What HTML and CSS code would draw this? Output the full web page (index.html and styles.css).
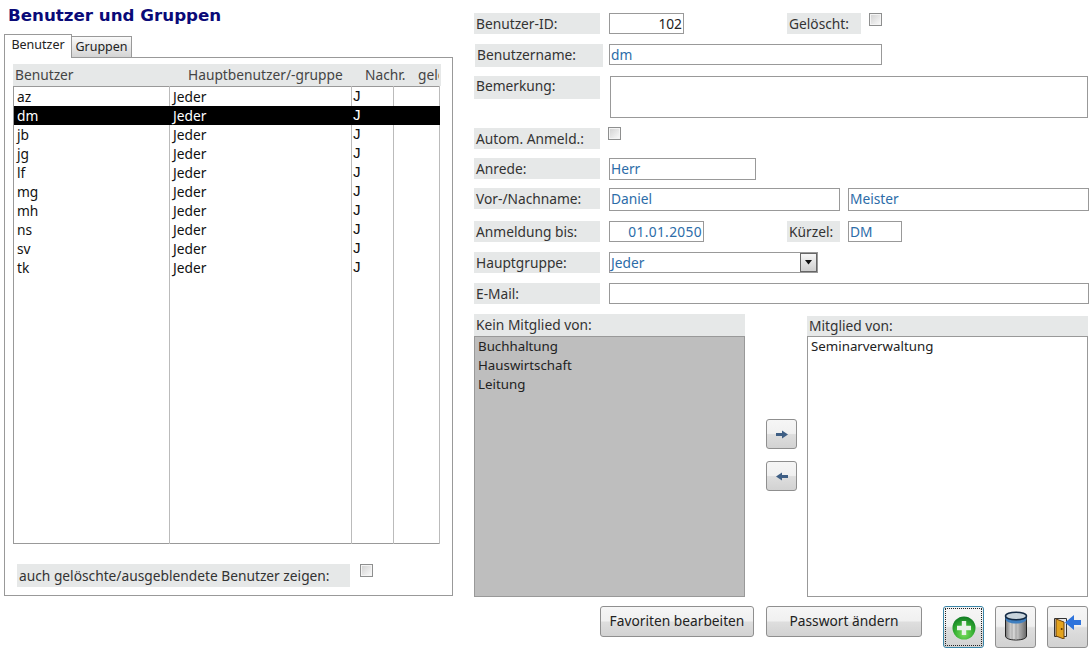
FILE: index.html
```html
<!DOCTYPE html>
<html lang="de">
<head>
<meta charset="utf-8">
<title>Benutzer und Gruppen</title>
<link rel="stylesheet" href="styles.css">
</head>
<body>
<div class="page">
  <section class="left">
    <h1 class="title">Benutzer und Gruppen</h1>
    <div class="tabs">
      <div class="tab tab-active">Benutzer</div>
      <div class="tab tab-idle">Gruppen</div>
    </div>
    <div class="panel">
      <div class="thead">
        <span class="th th-1">Benutzer</span>
        <span class="th th-2">Hauptbenutzer/-gruppe</span>
        <span class="th th-3">Nachr.</span>
        <span class="th th-4">gelöscht</span>
      </div>
      <table class="grid">
        <colgroup><col class="c1"><col class="c2"><col class="c3"><col class="c4"></colgroup>
        <tbody>
          <tr><td>az</td><td>Jeder</td><td>J</td><td></td></tr>
          <tr class="sel"><td>dm</td><td>Jeder</td><td>J</td><td></td></tr>
          <tr><td>jb</td><td>Jeder</td><td>J</td><td></td></tr>
          <tr><td>jg</td><td>Jeder</td><td>J</td><td></td></tr>
          <tr><td>lf</td><td>Jeder</td><td>J</td><td></td></tr>
          <tr><td>mg</td><td>Jeder</td><td>J</td><td></td></tr>
          <tr><td>mh</td><td>Jeder</td><td>J</td><td></td></tr>
          <tr><td>ns</td><td>Jeder</td><td>J</td><td></td></tr>
          <tr><td>sv</td><td>Jeder</td><td>J</td><td></td></tr>
          <tr><td>tk</td><td>Jeder</td><td>J</td><td></td></tr>
          <tr class="filler"><td></td><td></td><td></td><td></td></tr>
        </tbody>
      </table>
      <div class="panel-foot">
        <span class="label label-foot">auch gelöschte/ausgeblendete Benutzer zeigen:</span>
        <span class="check"></span>
      </div>
    </div>
  </section>

  <section class="right">
    <div class="row r1">
      <span class="label">Benutzer-ID:</span>
      <span class="field f-id">102</span>
      <span class="label label-del">Gelöscht:</span>
      <span class="check check-del"></span>
    </div>
    <div class="row r2">
      <span class="label label-name">Benutzername:</span>
      <span class="field value f-name">dm</span>
    </div>
    <div class="row r3">
      <span class="label label-top">Bemerkung:</span>
      <span class="field f-note"></span>
    </div>
    <div class="row r4">
      <span class="label">Autom. Anmeld.:</span>
      <span class="check check-auto"></span>
    </div>
    <div class="row r5">
      <span class="label">Anrede:</span>
      <span class="field value f-title">Herr</span>
    </div>
    <div class="row r6">
      <span class="label">Vor-/Nachname:</span>
      <span class="field value f-first">Daniel</span>
      <span class="field value f-last">Meister</span>
    </div>
    <div class="row r7">
      <span class="label">Anmeldung bis:</span>
      <span class="field value f-date">01.01.2050</span>
      <span class="label label-short">Kürzel:</span>
      <span class="field value f-short">DM</span>
    </div>
    <div class="row r8">
      <span class="label">Hauptgruppe:</span>
      <span class="field value f-select">Jeder<span class="arrow"><svg width="9" height="5" viewBox="0 0 9 5"><path d="M1 0h7L4.500 4.500z" fill="#111"/></svg></span></span>
    </div>
    <div class="row r9">
      <span class="label">E-Mail:</span>
      <span class="field f-mail"></span>
    </div>
    <div class="lists">
      <div class="list-col list-left">
        <div class="list-head">Kein Mitglied von:</div>
        <div class="list list-off">
          <div>Buchhaltung</div>
          <div>Hauswirtschaft</div>
          <div>Leitung</div>
        </div>
      </div>
      <div class="movers">
        <button class="btn mover"><svg width="12" height="9" viewBox="0 0 12 9"><path d="M0 3h6V.500L12 4.500l-6 4V6H0z" fill="#3f5f85"/></svg></button>
        <button class="btn mover"><svg width="12" height="9" viewBox="0 0 12 9"><path d="M12 3H6V.500L0 4.500l6 4V6h6z" fill="#3f5f85"/></svg></button>
      </div>
      <div class="list-col list-right">
        <div class="list-head head-right">Mitglied von:</div>
        <div class="list">
          <div>Seminarverwaltung</div>
        </div>
      </div>
    </div>
    <div class="actions">
      <button class="btn text-btn b-fav">Favoriten bearbeiten</button>
      <button class="btn text-btn b-pw">Passwort ändern</button>
      <button class="btn icon-btn focus"><svg class="ic-add" width="24" height="24" viewBox="0 0 24 24"><defs><radialGradient id="g" cx=".5" cy=".75" r=".75"><stop offset="0" stop-color="#7fe060"/><stop offset=".55" stop-color="#34ae32"/><stop offset="1" stop-color="#0f7a24"/></radialGradient></defs><circle cx="12" cy="12" r="11.500" fill="url(#g)"/><path d="M9.800 5h4.400v4.800H19v4.400h-4.800V19H9.800v-4.800H5V9.800h4.800z" fill="#e8f2e8"/></svg></button>
      <button class="btn icon-btn"><svg class="ic-bin" width="24" height="30" viewBox="0 0 24 30"><defs><linearGradient id="c" x1="0" x2="1" y1="0" y2="0"><stop offset="0" stop-color="#777"/><stop offset=".3" stop-color="#ddd"/><stop offset=".6" stop-color="#bbb"/><stop offset="1" stop-color="#666"/></linearGradient></defs><path d="M1.500 5v20c0 2.500 4.500 4 10.500 4s10.500-1.500 10.500-4V5z" fill="url(#c)" stroke="#222" stroke-width="1"/><path d="M8 11v17M12 12v17M16 11v17" stroke="#a0a0a0" stroke-width="1"/><path d="M1.500 5v3c0 2.500 4.500 4.500 10.500 4.500S22.500 10.500 22.500 8V5z" fill="#3f7fc0"/><ellipse cx="12" cy="5" rx="10.500" ry="3.800" fill="#c8d4dc" stroke="#142a44" stroke-width="1.500"/></svg></button>
      <button class="btn icon-btn"><svg class="ic-exit" width="27" height="24" viewBox="0 0 27 24"><path d="M.500 3.500h12v18H.500z" fill="#e8e8e8" stroke="#333" stroke-width="1"/><path d="M2 4l8 3v17l-8-3z" fill="#e3a31e" stroke="#6b4210" stroke-width="1"/><circle cx="7.700" cy="14" r="1" fill="#5a3000"/><path d="M27 5h-7V0l-9 7.500L20 15v-5h7z" fill="#2f74dc"/></svg></button>
    </div>
  </section>
</div>
</body>
</html>
```

FILE: styles.css
```css
* { box-sizing: border-box; }
html, body { margin: 0; padding: 0; background: #fff; }
body { width: 1092px; height: 653px; overflow: hidden; font: 13.75px/19px "Noto Sans", "Liberation Sans", sans-serif; color: #222; }
.page { display: flex; align-items: flex-start; padding-left: 4px; }

.left { width: 449px; margin-right: 21px; }
.title { margin: 5px 0 0 4px; height: 20px; font: bold 16.7px/20px "DejaVu Sans", sans-serif; color: #0a0a78; }

.tabs { display: flex; align-items: flex-end; margin-top: 9px; height: 24px; position: relative; z-index: 1; }
.tab { border: 1px solid #999; border-bottom: 0; font-size: 12.5px; line-height: 18px; text-align: center; }
.tab-active { width: 68px; height: 24px; background: #fff; padding-top: 1px; }
.tab-idle { width: 61px; height: 21px; margin-bottom: 1px; background: linear-gradient(#fafafa, #d4d4d4); padding-top: 1px; margin-left: -1px; }

.panel { height: 539px; margin-top: -1px; border: 1px solid #999; padding: 6px 12px 0 8px; }
.thead { display: flex; width: 428px; height: 22px; background: #e6e8e8; color: #444; line-height: 21px; white-space: nowrap; }
.th-1 { width: 175px; padding-left: 2px; }
.th-2 { width: 177px; }
.th-3 { width: 53px; }
.th-4 { width: 21px; overflow: hidden; }

.grid { width: 427px; height: 458px; table-layout: fixed; border-collapse: collapse; border: 1px solid #999; }
.c1 { width: 156px; } .c2 { width: 182px; } .c3 { width: 42px; } .c4 { width: 46px; }
.grid td { height: 19px; padding: 0 0 0 3px; border-right: 1px solid #bbb; line-height: 19px; color: #111; vertical-align: middle; overflow: hidden; }
.grid td:nth-child(3) { padding-left: 0; font-family: "Liberation Mono", monospace; font-size: 15.5px; line-height: 18px; }
.grid tr.sel td { background: #000; color: #fff; border-right-color: #000; }
.grid tr.filler td { height: auto; }

.panel-foot { display: flex; align-items: flex-start; margin: 20px 0 0 4px; }
.label { display: block; flex: none; width: 126px; height: 21px; margin-right: 9px; padding-left: 2px; background: #e6e8e8; color: #333; line-height: 21px; white-space: nowrap; }
.label-foot { width: 333px; height: 23px; margin-right: 10px; line-height: 24px; }
.check { display: block; flex: none; width: 13px; height: 13px; border: 1px solid #8e8f8f; background: linear-gradient(135deg, #d0d0d0, #fbfbfb); box-shadow: inset 0 0 0 1px #f4f4f4; }
.check-del { margin-left: -1px; }
.check-auto { margin: -1px 0 0 -1px; }

.right { width: 616px; padding-top: 13px; }
.row { display: flex; align-items: flex-start; }
.r2 { margin-top: 10px; } .r3 { margin-top: 9px; } .r4 { margin-top: 10px; } .r5 { margin-top: 9px; }
.r6 { margin-top: 8px; } .r7 { margin-top: 10px; } .r8 { margin-top: 10px; } .r9 { margin-top: 10px; }

.field { display: block; flex: none; height: 21px; border: 1px solid #999; background: #fff; padding: 0 1px; line-height: 19px; white-space: nowrap; }
.value { color: #2c6ca8; }
.f-id { width: 75px; text-align: right; color: #222; }
.label-del { width: 74px; margin-left: 103px; }
.label-name { height: 23px; margin-left: 1px; width: 128px; margin-right: 6px; }
.f-name { width: 273px; }
.label-top { height: 23px; line-height: 20px; }
.f-note { width: 478px; height: 42px; margin-left: 1px; }
.f-title { width: 147px; height: 22px; }
.f-first { width: 231px; height: 23px; }
.f-last { width: 241px; height: 23px; margin-left: 8px; }
.f-date { width: 95px; text-align: right; letter-spacing: .35px; }
.label-short { width: 53px; margin-left: 83px; margin-right: 8px; }
.f-short { width: 54px; padding-left: 1px; }
.f-select { position: relative; width: 209px; }
.arrow { position: absolute; right: 0; top: 0; width: 17px; height: 19px; border: 1px solid #666; background: linear-gradient(#f6f6f6, #cfcfcf); display: flex; align-items: center; justify-content: center; }
.f-mail { width: 480px; }

.lists { display: flex; margin-top: 10px; }
.list-col { flex: none; }
.list-left { width: 271px; }
.list-right { width: 281px; padding-top: 2px; }
.list-head { height: 22px; padding-left: 2px; background: #e6e8e8; color: #333; line-height: 21px; }
.head-right { height: 20px; line-height: 19px; }
.list { height: 261px; border: 1px solid #999; background: #fff; padding: 0 3px; color: #222; font-size: 13.3px; }
.list-off { background: #bebebe; }
.movers { flex: none; width: 62px; padding: 105px 0 0 21px; display: flex; flex-direction: column; gap: 12px; }

.btn { display: flex; align-items: center; justify-content: center; padding: 0; border: 1px solid #8f8f8f; border-radius: 3px; background: linear-gradient(#f6f6f6 0, #f0f0f0 48%, #dedede 52%, #d2d2d2 100%); color: #222; font: inherit; }
.mover { width: 31px; height: 30px; }

.actions { display: flex; align-items: flex-start; margin-top: 9px; padding-left: 126px; }
.text-btn { height: 31px; line-height: 19px; padding-bottom: 2px; }
.b-fav { width: 154px; }
.b-pw { width: 156px; margin-left: 12px; }
.icon-btn { width: 41px; height: 42px; margin-left: 11px; }
.b-pw + .icon-btn { margin-left: 21px; }
.focus { border: 1px solid #3c86a8; outline: 1px dotted #222; outline-offset: -3px; }
.ic-add { margin-top: 1px; }
.ic-bin { margin-bottom: 2px; }
.ic-exit { margin: -1px 0 0 -1px; }
```
